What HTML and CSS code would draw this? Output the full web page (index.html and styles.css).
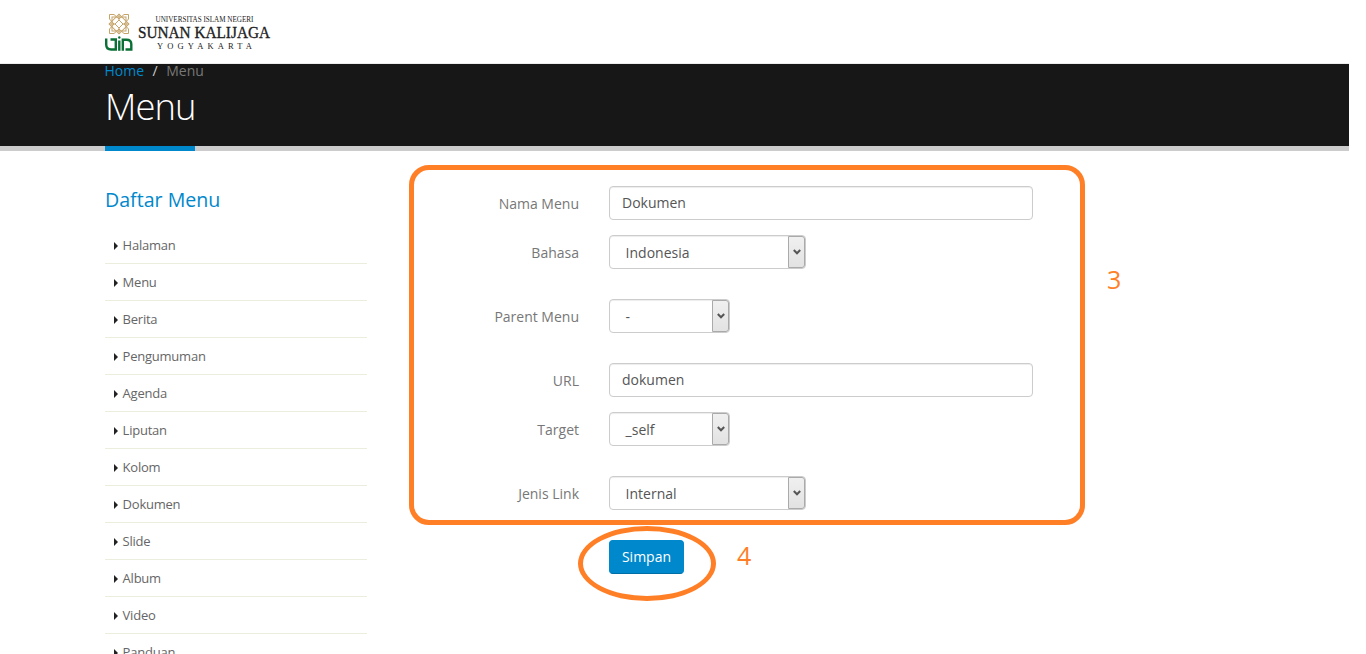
FILE: index.html
```html
<!DOCTYPE html>
<html lang="id">
<head>
<meta charset="utf-8">
<title>Menu</title>
<link rel="stylesheet" href="styles.css">
</head>
<body>
<div class="page">
  <header class="header">
    <svg class="logo" width="176" height="44" viewBox="0 0 176 44">
      <g fill="none" stroke="#c5a469" stroke-width="1">
        <rect x="7" y="6" width="14" height="14"/>
        <rect x="7" y="6" width="14" height="14" transform="rotate(45 14 13)"/>
        <path d="M14 9l4 4-4 4-4-4z"/>
        <path d="M14 3v6M14 17v6M4 13h6M18 13h6"/>
        <path d="M4.500 8V3.500H9l5 4.500 5-4.500h4.500V8L19 13l4.500 5v4.500H19L14 18l-5 4.500H4.500V18L9 13z"/>
      </g>
      <g fill="none" stroke="#0a7035" stroke-width="2.400">
        <path d="M1.200 27.500v6q0 5 5 5h4.600v-10H5.500"/>
        <path d="M14.300 29.500v10.300"/>
        <path d="M17.800 39.800V28.700h3.700q4.800 0 4.800 4.500v5.300h-5.800"/>
      </g>
      <circle cx="14.300" cy="26.500" r="1.200" fill="#0a7035"/>
      <g class="logo-text">
        <text x="50.500" y="11" font-size="8.200" textLength="98" lengthAdjust="spacingAndGlyphs">UNIVERSITAS ISLAM NEGERI</text>
        <text class="logo-name" x="33" y="27" font-size="17.500" textLength="132" lengthAdjust="spacingAndGlyphs">SUNAN KALIJAGA</text>
        <text x="52" y="38" font-size="8.500" textLength="95">YOGYAKARTA</text>
      </g>
    </svg>
  </header>
  <section class="page-top">
    <nav class="breadcrumb"><a>Home</a><span class="slash">/</span><span>Menu</span></nav>
    <h1>Menu</h1>
  </section>
  <main class="content">
    <aside class="sidebar">
      <h4>Daftar Menu</h4>
      <ul>
        <li>Halaman</li><li>Menu</li><li>Berita</li><li>Pengumuman</li><li>Agenda</li><li>Liputan</li><li>Kolom</li><li>Dokumen</li><li>Slide</li><li>Album</li><li>Video</li><li>Panduan</li>
      </ul>
    </aside>
    <form class="form">
      <div class="fields">
        <div class="row"><label>Nama Menu</label><div class="input">Dokumen</div></div>
        <div class="row spaced"><label>Bahasa</label><div class="select wide"><span>Indonesia</span><i><svg width="8" height="6" viewBox="0 0 8 6"><path d="M.8 1L4 4.300 7.200 1"/></svg></i></div></div>
        <div class="row spaced"><label>Parent Menu</label><div class="select"><span>-</span><i><svg width="8" height="6" viewBox="0 0 8 6"><path d="M.8 1L4 4.300 7.200 1"/></svg></i></div></div>
        <div class="row"><label>URL</label><div class="input">dokumen</div></div>
        <div class="row spaced"><label>Target</label><div class="select"><span>_self</span><i><svg width="8" height="6" viewBox="0 0 8 6"><path d="M.8 1L4 4.300 7.200 1"/></svg></i></div></div>
        <div class="row"><label>Jenis Link</label><div class="select wide"><span>Internal</span><i><svg width="8" height="6" viewBox="0 0 8 6"><path d="M.8 1L4 4.300 7.200 1"/></svg></i></div></div>
        <span class="mark three">3</span>
      </div>
      <div class="actions">
        <button type="button">Simpan</button>
        <span class="ring"></span>
        <span class="mark four">4</span>
      </div>
    </form>
  </main>
</div>
</body>
</html>
```
FILE: styles.css
```css
* { box-sizing: border-box; }
html { overflow: hidden; }
body { margin: 0; background: #fff; font: 14px/22px "Open Sans", sans-serif; color: #777; }
.page { width: 1349px; height: 654px; overflow: hidden; }
.header { height: 64px; padding: 11px 0 0 105px; border-bottom: 1px solid #ededed; }
.logo { display: block; }
.logo-text { font-family: "Liberation Serif", serif; fill: #222; }
.logo-name { stroke: #222; stroke-width: .35px; }
.page-top { height: 87px; padding-left: 105px; background: #171717; border-bottom: 5px solid #ccc; }
.breadcrumb { display: flex; height: 18px; margin-left: -.5px; line-height: 14px; }
.breadcrumb a { color: #08c; }
.slash { color: #ccc; padding: 0 8.5px; }
h1 { display: inline-block; height: 69px; margin: 0; padding-top: 3px; border-bottom: 5px solid #08c; color: #fff; font-size: 36.4px; font-weight: 300; letter-spacing: -1px; line-height: 42px; vertical-align: top; }
.content { display: flex; padding-left: 105px; }
.sidebar { width: 262px; padding-top: 35px; }
h4 { margin: 0; color: #08c; font-size: 19.6px; font-weight: 400; line-height: 27px; }
ul { list-style: none; margin: 14px 0 0; padding: 0; }
li { display: flex; align-items: center; height: 37px; padding-left: 9px; border-bottom: 1px solid #ededde; font-size: 13px; letter-spacing: -.23px; color: #666; }
li::before { content: ""; margin: 1px 4.6px 0 0; border-left: 4px solid #222; border-top: 4px solid transparent; border-bottom: 4px solid transparent; }
.form { margin: 14px 0 0 42px; }
.fields { position: relative; width: 676px; height: 360px; padding: 16px 0 0; border: 5px solid #ff7f27; border-radius: 20px; }
.row { display: flex; align-items: center; height: 34px; margin-bottom: 15px; }
.row.spaced { margin-bottom: 30px; }
label { width: 165px; margin-right: 30px; padding-top: 1px; text-align: right; }
.input, .select { height: 34px; border: 1px solid #ccc; border-radius: 4px; box-shadow: inset 0 1px 1px rgba(0,0,0,.075); color: #555; line-height: 32px; }
.input { width: 424px; padding-left: 12px; }
.select { display: flex; width: 121px; padding-left: 15.6px; line-height: 34px; }
.select.wide { width: 197px; }
.select span { flex: 1; }
.select i { display: flex; align-items: center; justify-content: center; width: 17px; border: 1px solid #aaa; border-radius: 0 3px 3px 0; background: linear-gradient(#f0f0f0, #e2e2e2); }
.select path { fill: none; stroke: #555; stroke-width: 2; }
.actions { position: relative; padding: 15px 0 0 200px; }
button { display: block; width: 75px; height: 34px; padding: 0; border: 1px solid #08c; border-bottom-color: #006ea6; border-radius: 4px; background: #08c; color: #fff; font: inherit; }
.ring { position: absolute; left: 169px; top: 1px; width: 138px; height: 75px; border: 5px solid #ff7f27; border-radius: 50%; }
.mark { position: absolute; color: #ff7f27; font-size: 25px; line-height: 30px; }
.three { left: 693px; top: 94px; }
.four { left: 328px; top: 15px; }
```
